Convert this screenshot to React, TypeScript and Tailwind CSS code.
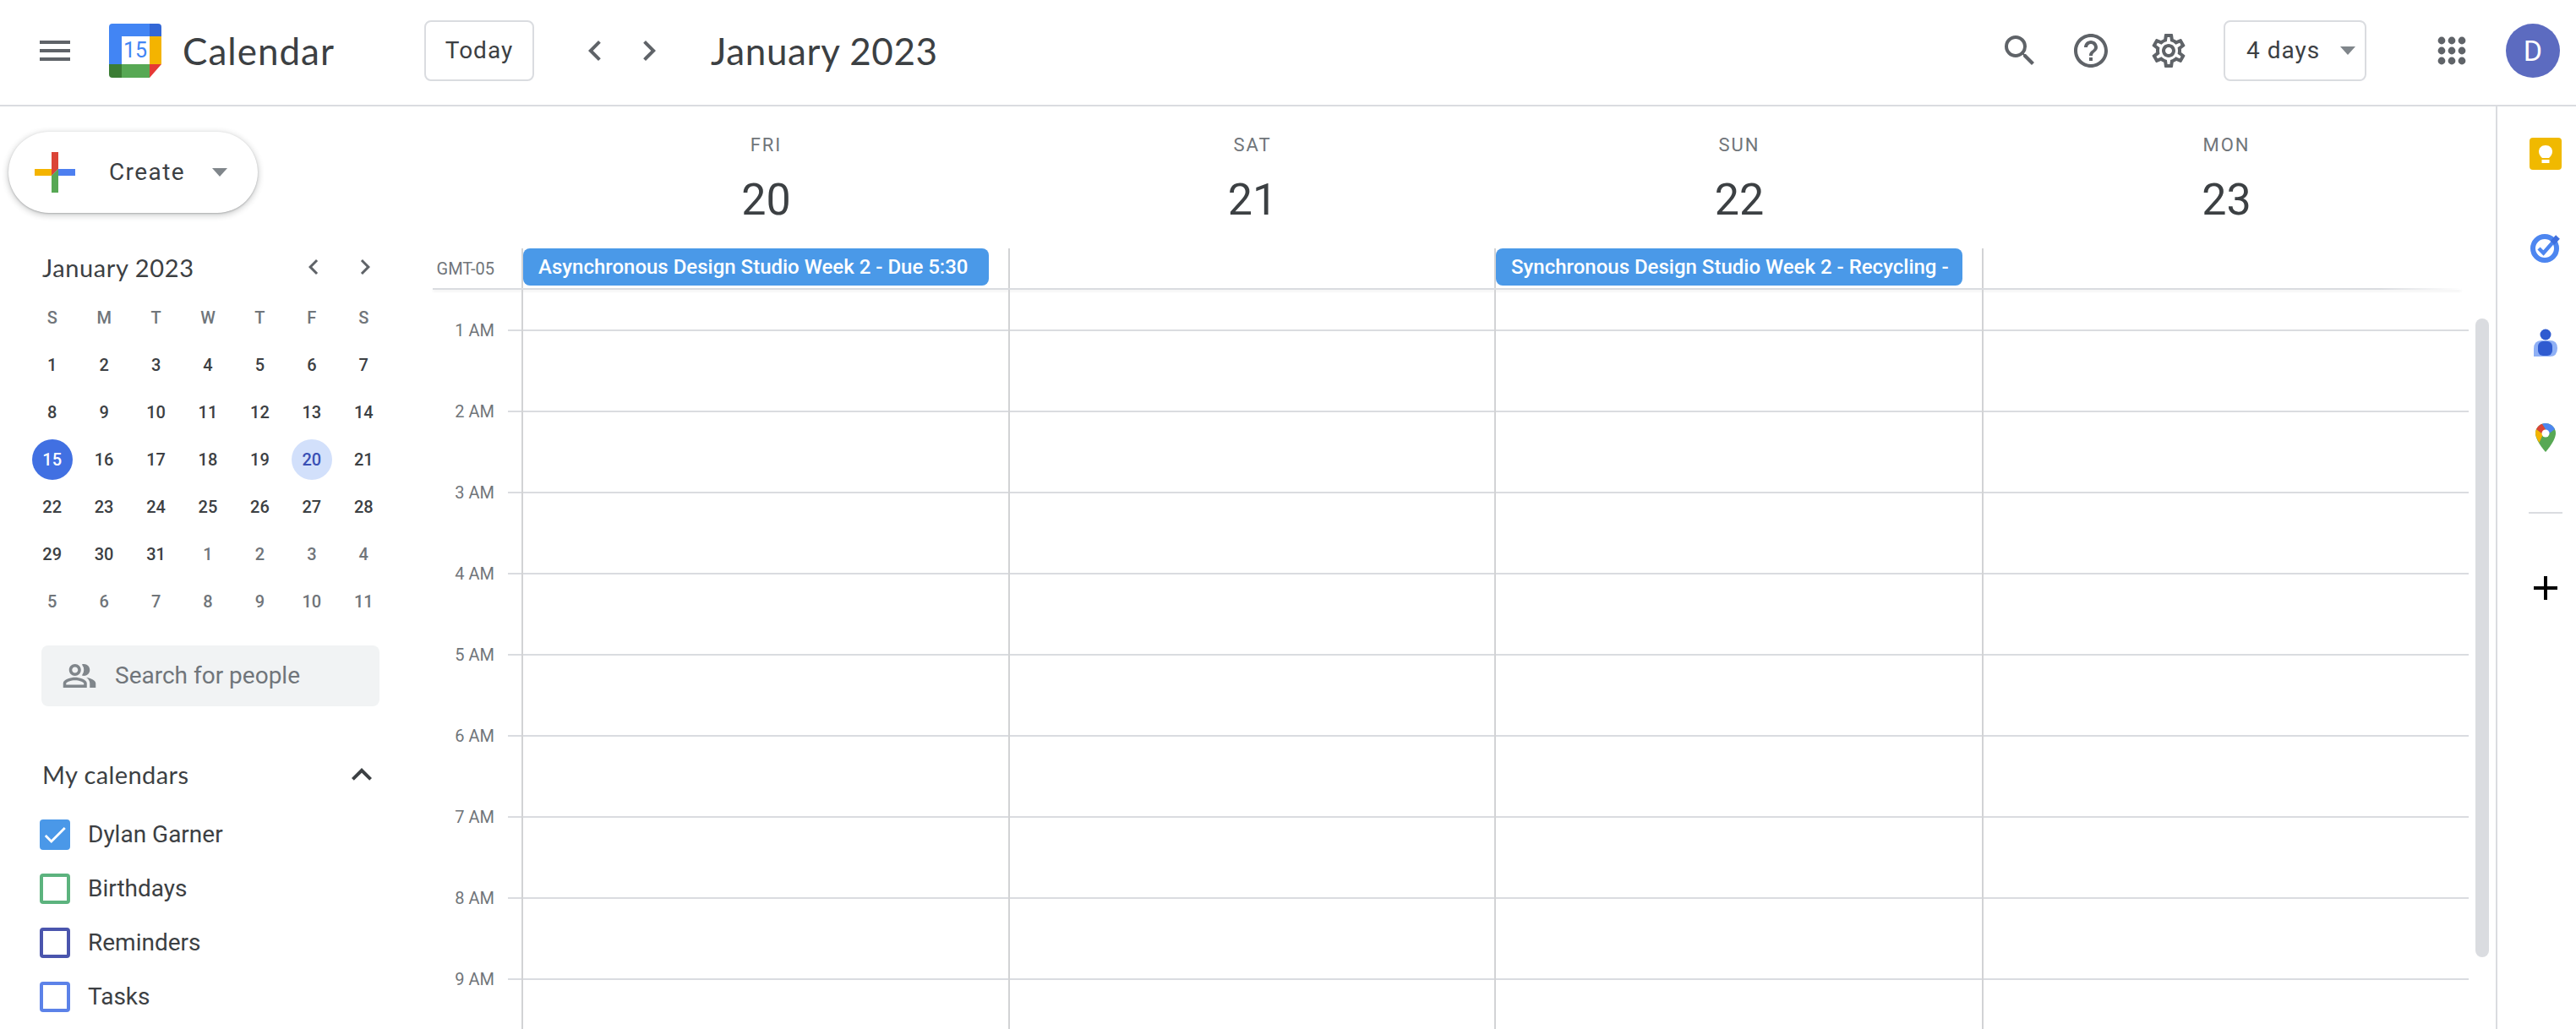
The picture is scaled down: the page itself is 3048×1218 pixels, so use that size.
import {
  MdMenu,
  MdSearch,
  MdHelpOutline,
  MdOutlineSettings,
  MdChevronLeft,
  MdChevronRight,
  MdExpandLess,
  MdCheck,
  MdAdd,
  MdOutlinePeopleAlt,
} from "react-icons/md";

const miniWeeks = [
  ["1", "2", "3", "4", "5", "6", "7"],
  ["8", "9", "10", "11", "12", "13", "14"],
  ["15", "16", "17", "18", "19", "20", "21"],
  ["22", "23", "24", "25", "26", "27", "28"],
  ["29", "30", "31", "1", "2", "3", "4"],
  ["5", "6", "7", "8", "9", "10", "11"],
];

const days = [
  { name: "FRI", date: "20", event: "Asynchronous Design Studio Week 2 - Due 5:30" },
  { name: "SAT", date: "21" },
  { name: "SUN", date: "22", event: "Synchronous Design Studio Week 2 - Recycling -" },
  { name: "MON", date: "23" },
];

const hours = ["1 AM", "2 AM", "3 AM", "4 AM", "5 AM", "6 AM", "7 AM", "8 AM", "9 AM"];

function Logo() {
  return (
    <svg width="62" height="64" viewBox="0 0 62 64">
      <path d="M4 0H48V15H15V48H0V4Q0 0 4 0Z" fill="#4285f4" />
      <path d="M48 0H58Q62 0 62 4V15H48Z" fill="#3367d6" />
      <rect x="48" y="15" width="14" height="33" fill="#f4b400" />
      <path d="M48 48H62L48 64Z" fill="#e53935" />
      <rect x="15" y="48" width="33" height="16" fill="#57a854" />
      <path d="M0 48H15V64H4Q0 64 0 60Z" fill="#3b7d34" />
      <rect x="15" y="15" width="33" height="33" fill="#fff" />
      <text x="31" y="40" textAnchor="middle" fontSize="25" fontFamily="Roboto, sans-serif" fill="#4285f4">
        15
      </text>
    </svg>
  );
}

function CreatePlus() {
  return (
    <svg width="48" height="48" viewBox="0 0 48 48">
      <path d="M20 0H28V20L20 28Z" fill="#db4437" />
      <path d="M28 20H48V28H20Z" fill="#4d7ff0" />
      <path d="M0 20H20V28H0Z" fill="#f4b400" />
      <path d="M20 28L28 20V48H20Z" fill="#57a854" />
    </svg>
  );
}

function AppsGrid() {
  const spots = [5, 17, 29];
  return (
    <svg width="34" height="34" viewBox="0 0 34 34" fill="#5f6368">
      {spots.map((y) => spots.map((x) => <circle key={`${x}-${y}`} cx={x} cy={y} r="4.4" />))}
    </svg>
  );
}

function Caret() {
  return <div className="h-0 w-0 border-x-[9px] border-t-[10px] border-x-transparent border-t-[#80868b]" />;
}

function TopBar() {
  return (
    <header className="flex h-[126px] items-center border-b-2 border-[#dadce0] pb-[4px] text-[#3c4043]">
      <div className="ml-[41px] flex w-[461px] items-center">
        <MdMenu size={48} className="text-[#5f6368]" />
        <div className="ml-[40px]">
          <Logo />
        </div>
        <span className="ml-[25px] font-['Lato',sans-serif] text-[44px] leading-none tracking-[1px]">Calendar</span>
      </div>
      <button className="h-[72px] w-[130px] rounded-lg border-2 border-[#dadce0] text-[28px] tracking-[1px]">Today</button>
      <MdChevronLeft size={48} className="ml-[48px] text-[#5f6368]" />
      <MdChevronRight size={48} className="ml-[16px] text-[#5f6368]" />
      <h1 className="ml-[49px] font-['Lato',sans-serif] text-[44px] leading-none tracking-[0.6px]">January 2023</h1>
      <div className="ml-auto flex items-center text-[#5f6368]">
        <MdSearch size={48} />
        <MdHelpOutline size={48} className="ml-[36px]" />
        <MdOutlineSettings size={48} className="ml-[44px]" />
        <button className="ml-[41px] flex h-[72px] w-[169px] items-center rounded-lg border-2 border-[#dadce0] pl-[25px] text-[28px] tracking-[1px] text-[#3c4043]">
          4 days
          <span className="ml-[24px]">
            <Caret />
          </span>
        </button>
        <div className="ml-[84px]">
          <AppsGrid />
        </div>
        <div className="ml-[47px] mr-[19px] flex h-[64px] w-[64px] items-center justify-center rounded-full bg-[#5c6bc0] text-[34px] text-white">
          D
        </div>
      </div>
    </header>
  );
}

function MiniCalendar() {
  return (
    <div className="ml-[31px] mt-[44px] w-[430px]">
      <div className="flex h-[40px] items-center pl-[19px] pr-[11px] text-[#3c4043]">
        <span className="flex-1 font-['Lato',sans-serif] text-[29px] leading-none tracking-[0.6px]">January 2023</span>
        <MdChevronLeft size={36} className="text-[#5f6368]" />
        <MdChevronRight size={36} className="ml-[25px] text-[#5f6368]" />
      </div>
      <div className="mt-[12px] grid grid-cols-7 text-[20px] font-medium">
        {["S", "M", "T", "W", "T", "F", "S"].map((d, i) => (
          <div key={i} className="flex h-[56px] items-center justify-center text-[#70757a]">
            {d}
          </div>
        ))}
        {miniWeeks.map((week, r) =>
          week.map((d, c) => {
            const muted = r === 5 || (r === 4 && c > 2);
            const today = r === 2 && c === 0;
            const selected = r === 2 && c === 5;
            let tone = muted ? "text-[#70757a]" : "text-[#3c4043]";
            if (today) tone = "rounded-full bg-[#4170e2] text-white";
            if (selected) tone = "rounded-full bg-[#d2e0fb] text-[#3a50b5]";
            return (
              <div key={`${r}-${c}`} className="flex h-[56px] items-center justify-center">
                <span className={`flex h-[48px] w-[48px] items-center justify-center ${tone}`}>{d}</span>
              </div>
            );
          }),
        )}
      </div>
    </div>
  );
}

function CalendarRow({ label, color, checked }: { label: string; color: string; checked?: boolean }) {
  return (
    <div className="flex h-[64px] items-center">
      <div
        className={`flex h-[36px] w-[36px] items-center justify-center rounded-[4px] border-[4px] ${color} ${
          checked ? "bg-[#4a98e8]" : ""
        }`}
      >
        {checked && <MdCheck size={34} className="shrink-0 text-white" />}
      </div>
      <span className="ml-[21px] text-[28px] text-[#3c4043]">{label}</span>
    </div>
  );
}

function Sidebar() {
  return (
    <aside className="w-[512px] shrink-0 overflow-hidden">
      <button className="ml-[10px] mt-[30px] flex h-[96px] w-[295px] items-center rounded-full bg-white pl-[31px] shadow-[0_2px_6px_2px_rgba(60,64,67,0.2),0_1px_2px_rgba(60,64,67,0.3)]">
        <CreatePlus />
        <span className="ml-[40px] text-[28px] tracking-[1.4px] text-[#3c4043]">Create</span>
        <span className="ml-[32px]">
          <Caret />
        </span>
      </button>
      <MiniCalendar />
      <div className="ml-[49px] mt-[24px] flex h-[72px] w-[400px] items-center rounded-lg bg-[#f1f3f4] pl-[24px] text-[#70757a]">
        <MdOutlinePeopleAlt size={42} className="text-[#80868b]" />
        <span className="ml-[21px] text-[28px]">Search for people</span>
      </div>
      <div className="ml-[50px] mt-[61px] flex h-[40px] w-[402px] items-center justify-between text-[#3c4043]">
        <span className="font-['Lato',sans-serif] text-[29px] tracking-[0.4px]">My calendars</span>
        <MdExpandLess size={48} />
      </div>
      <div className="ml-[47px] mt-[19px]">
        <CalendarRow label="Dylan Garner" color="border-[#4a98e8]" checked />
        <CalendarRow label="Birthdays" color="border-[#5cb37e]" />
        <CalendarRow label="Reminders" color="border-[#4a55ad]" />
        <CalendarRow label="Tasks" color="border-[#5c82e8]" />
      </div>
    </aside>
  );
}

function CalendarGrid() {
  return (
    <section className="w-[2409px] shrink-0">
      <div className="flex h-[168px] pl-[105px]">
        <div className="grid w-[2304px] grid-cols-[576px_575px_577px_576px]">
          {days.map((d) => (
            <div key={d.name} className="flex flex-col items-center pl-[3px] pt-[32px] text-center">
              <span className="text-[22px] leading-[28px] tracking-[2px] text-[#70757a]">{d.name}</span>
              <span className="mt-[19px] text-[52px] leading-[64px] text-[#3c4043]">{d.date}</span>
            </div>
          ))}
        </div>
      </div>
      <div className="flex h-[47px]">
        <div className="flex w-[105px] shrink-0 items-center justify-end pr-[32px] text-[20px] text-[#70757a]">
          GMT-05
        </div>
        <div className="grid w-[2304px] grid-cols-[576px_575px_577px_576px]">
          {days.map((d) => (
            <div key={d.name} className="border-l-2 border-[#d2d3d5] pr-[23px]">
              {d.event && (
                <div className="flex h-[44px] items-center truncate rounded-lg bg-[#4a99e8] pl-[18px] text-[24px] font-medium text-white">
                  {d.event}
                </div>
              )}
            </div>
          ))}
        </div>
      </div>
      <div className="h-[2px] w-[2400px] bg-linear-to-r from-[#dadce0] via-[#dadce0] via-[96%] to-transparent shadow-[0_2px_3px_rgba(60,64,67,0.08)]" />
      <div className="flex">
        <div className="w-[105px] shrink-0">
          {hours.map((h) => (
            <div key={h} className="flex h-[96px] items-center text-[20px] text-[#70757a]">
              <span className="w-[73px] text-right">{h}</span>
              <span className="ml-[16px] h-[2px] w-[16px] bg-[#dadce0]" />
            </div>
          ))}
        </div>
        <div className="grid w-[2304px] grid-cols-[576px_575px_577px_576px]">
          {days.map((d) => (
            <div key={d.name} className="border-l-2 border-[#d2d3d5]">
              <div className="h-[49px] border-b-2 border-[#dadce0]" />
              {hours.map((h) => (
                <div key={h} className="h-[96px] border-b-2 border-[#dadce0]" />
              ))}
            </div>
          ))}
        </div>
      </div>
    </section>
  );
}

function SidePanel() {
  return (
    <aside className="flex w-[95px] shrink-0 flex-col items-center border-l-2 border-[#dadce0] pl-[20px]">
      <svg className="mt-[37px]" width="38" height="38" viewBox="0 0 38 38">
        <rect width="38" height="38" rx="4" fill="#f0b900" />
        <path d="M19 9C14 9 11 12.500 11 16.500C11 20 13 22 15 24H23C25 22 27 20 27 16.500C27 12.500 24 9 19 9Z" fill="#fff" />
        <rect x="14.500" y="26" width="9" height="4" fill="#fff" />
      </svg>
      <svg className="mt-[76px]" width="36" height="34" viewBox="0 0 36 34" fill="none">
        <circle cx="17" cy="17" r="14" stroke="#4d86f0" strokeWidth="6" />
        <path d="M10 17L15.500 22.500L30 6" stroke="#4d86f0" strokeWidth="4.500" />
        <path d="M26 10.500L32.500 3.500" stroke="#3f6fdd" strokeWidth="6.500" />
      </svg>
      <svg className="mt-[78px]" width="28" height="33" viewBox="0 0 28 33">
        <circle cx="14" cy="7" r="6.500" fill="#2f5bd0" />
        <path d="M9 14H19Q28 14 28 23Q28 33 19 33H0V24Q0 14 9 14Z" fill="#8fb0f5" />
        <rect x="5" y="15" width="17" height="17" rx="6" fill="#2f5bd0" />
      </svg>
      <svg className="mt-[79px]" width="24" height="34" viewBox="0 0 24 34">
        <path d="M12 0C5.400 0 0 5.300 0 11.800C0 21 12 34 12 34C12 34 24 21 24 11.800C24 5.300 18.600 0 12 0Z" fill="#57a854" />
        <path d="M1 7L9 13L4.500 23C2 19 0 15 0 11.800C0 10 .4 8.500 1 7Z" fill="#f4b400" />
        <path d="M3 4C4.500 2.500 6 1.500 8 .8L12 7L9 13L1 7Z" fill="#db4437" />
        <path d="M8 .8C9 .3 10.500 0 12 0C17 0 21 3 23 7L15 13L12 7Z" fill="#4d86f0" />
        <circle cx="12" cy="12" r="4.500" fill="#fff" />
      </svg>
      <div className="mt-[71px] h-[2px] w-[40px] bg-[#dadce0]" />
      <MdAdd size={48} className="mt-[64px] text-black" />
    </aside>
  );
}

export default function App() {
  return (
    <div className="h-[1218px] w-[3048px] overflow-hidden bg-white font-['Roboto',sans-serif]">
      <TopBar />
      <main className="flex h-[1092px]">
        <Sidebar />
        <CalendarGrid />
        <div className="w-[32px] shrink-0 pl-[8px] pt-[251px]">
          <div className="h-[756px] w-[16px] rounded-full bg-[#dadce0]" />
        </div>
        <SidePanel />
      </main>
    </div>
  );
}
